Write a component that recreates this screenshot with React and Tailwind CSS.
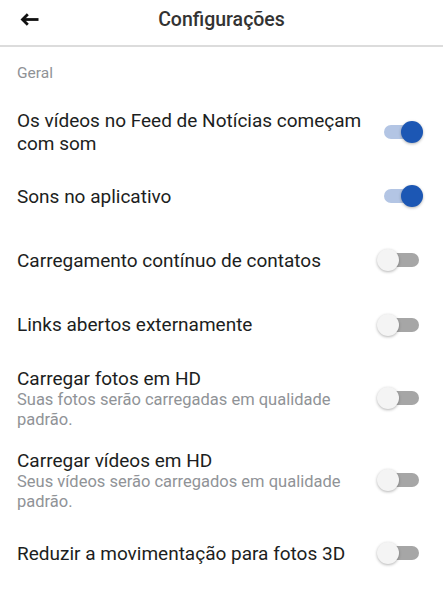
import { useState } from 'react';

const settings = [
  { id: 1, title: 'Os vídeos no Feed de Notícias começam com som', on: true, h: 'h-[64px]' },
  { id: 2, title: 'Sons no aplicativo', on: true, h: 'h-[64px]' },
  { id: 3, title: 'Carregamento contínuo de contatos', on: false, h: 'h-[64px]' },
  { id: 4, title: 'Links abertos externamente', on: false, h: 'h-[65px]' },
  { id: 5, title: 'Carregar fotos em HD', sub: 'Suas fotos serão carregadas em qualidade padrão.', on: false, h: 'h-[82px]' },
  { id: 6, title: 'Carregar vídeos em HD', sub: 'Seus vídeos serão carregados em qualidade padrão.', on: false, h: 'h-[82px]' },
  { id: 7, title: 'Reduzir a movimentação para fotos 3D', on: false, h: 'h-[64px]' },
];

const Toggle = ({ on, onClick }) => (
  <button
    onClick={onClick}
    className={`w-[35px] h-[14px] shrink-0 rounded-full flex items-center ${
      on ? 'bg-[#b3c5e4] justify-end' : 'bg-[#a6a6a6] justify-start'
    }`}
  >
    <span
      className={`w-[22px] h-[22px] shrink-0 rounded-full shadow-[0_1px_3px_rgba(0,0,0,0.3)] ${
        on ? '-mr-[4px] bg-[#1c57b4]' : '-ml-[7px] bg-[#f4f4f4]'
      }`}
    />
  </button>
);

const App = () => {
  const [items, setItems] = useState(settings);

  const handleToggle = (id) => {
    setItems(prev => prev.map(item => (item.id === id ? { ...item, on: !item.on } : item)));
  };

  return (
    <div className="min-h-screen bg-white font-['Roboto',sans-serif] text-[#1c1e21]">
      <header className="h-[47px] grid grid-cols-[1fr_auto_1fr] items-center pb-[6px] border-b-2 border-[#dcdcdc]">
        <button className="justify-self-start ml-[20px]">
          <svg width="19" height="13" viewBox="0 0 19 13" fill="none">
            <path d="M18.5 6.5H3" stroke="#111" strokeWidth="2.8" />
            <path d="M7.8 1.2L2.5 6.5L7.8 11.8" stroke="#111" strokeWidth="2.8" />
          </svg>
        </button>
        <h1 className="text-[19.5px] font-medium text-[#333]">Configurações</h1>
        <div />
      </header>

      <div className="h-[53px] flex items-center px-[17px] text-[15.5px] text-[#8f9296]">Geral</div>

      {items.map(item => (
        <div key={item.id} className={`${item.h} flex items-center pl-[17px] pr-[24px]`}>
          <div className="flex-1 min-w-0 pr-[6px]">
            <p className="text-[19px] leading-[23px]">{item.title}</p>
            {item.sub && (
              <p className="text-[16.5px] leading-[20px] text-[#909397] pr-[10px]">{item.sub}</p>
            )}
          </div>
          <Toggle on={item.on} onClick={() => handleToggle(item.id)} />
        </div>
      ))}
    </div>
  );
};

export default App;
